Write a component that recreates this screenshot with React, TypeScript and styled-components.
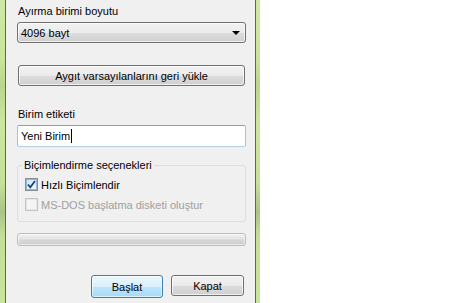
import React from 'react';
import styled, { createGlobalStyle } from 'styled-components';

const GlobalStyle = createGlobalStyle`
  html, body {
    margin: 0;
    padding: 0;
    background: #ffffff;
  }
  body {
    font-family: 'Liberation Sans', Arial, sans-serif;
    font-size: 11px;
    color: #000000;
  }
`;

const Screen = styled.div`
  display: flex;
  width: 450px;
  height: 303px;
  overflow: hidden;
  background: #ffffff;
`;

const FrameEdge = styled.div<{ $width: number }>`
  flex: 0 0 ${(props) => props.$width}px;
  background: linear-gradient(
    180deg,
    #cfe8a4 0%,
    #c9e59a 20%,
    #b9d68c 28%,
    #cbe69e 40%,
    #c6e299 60%,
    #a9c485 70%,
    #c4e097 78%,
    #c8e59c 100%
  );
`;

const Panel = styled.div`
  flex: 0 0 251px;
  background: #f0f0f0;
  border-left: 1px solid #5c6b50;
  border-right: 1px solid #5c6b50;
  padding: 0 9px 0 11px;
  box-sizing: border-box;
  display: flex;
  flex-direction: column;
`;

const Desktop = styled.div`
  flex: 1;
  background: #ffffff;
`;

const Label = styled.div<{ $top: number }>`
  margin-top: ${(props) => props.$top}px;
  line-height: 15px;
  height: 15px;
  padding-left: 1px;
`;

const Select = styled.div`
  margin-top: 3px;
  height: 21px;
  border: 1px solid #707070;
  border-radius: 3px;
  box-sizing: border-box;
  background: linear-gradient(180deg, #f2f2f2 0%, #ebebeb 50%, #dddddd 51%, #cfcfcf 100%);
  box-shadow: inset 0 0 0 1px rgba(255, 255, 255, 0.7);
  display: flex;
  align-items: center;
  justify-content: space-between;
  padding: 0 5px 0 3px;
`;

const Arrow = styled.span`
  width: 0;
  height: 0;
  border-left: 4px solid transparent;
  border-right: 4px solid transparent;
  border-top: 4px solid #000000;
`;

const PushButton = styled.button<{ $focused?: boolean; $width?: number }>`
  font: inherit;
  color: #000000;
  height: ${(props) => (props.$focused ? 23 : 21)}px;
  width: ${(props) => (props.$width ? `${props.$width}px` : 'auto')};
  border: 1px solid ${(props) => (props.$focused ? '#3c7fb1' : '#707070')};
  border-radius: 3px;
  box-sizing: border-box;
  padding: 0;
  background: ${(props) =>
    props.$focused
      ? 'linear-gradient(180deg, #eaf6fd 0%, #d9f0fc 50%, #bee6fd 51%, #a7d9f5 100%)'
      : 'linear-gradient(180deg, #f2f2f2 0%, #ebebeb 50%, #dddddd 51%, #cfcfcf 100%)'};
  box-shadow: inset 0 0 0 1px
    ${(props) => (props.$focused ? 'rgba(255, 255, 255, 0.6)' : 'rgba(255, 255, 255, 0.7)')};
  display: flex;
  align-items: center;
  justify-content: center;
`;

const WideButton = styled(PushButton)`
  margin-top: 22px;
  margin-left: 1px;
  margin-right: 1px;
`;

const TextInput = styled.div`
  margin-top: 3px;
  height: 22px;
  box-sizing: border-box;
  background: #ffffff;
  border: 1px solid #abadb3;
  border-top-color: #7da2ce;
  border-left-color: #a4c0e2;
  border-right-color: #a4c0e2;
  border-bottom-color: #b5cfe7;
  border-radius: 2px;
  display: flex;
  align-items: center;
  padding-left: 3px;
`;

const Caret = styled.span`
  display: inline-block;
  width: 1px;
  height: 14px;
  background: #000000;
  margin-left: 1px;
`;

const GroupBox = styled.fieldset`
  margin: 11px 0 0 0;
  height: 64px;
  box-sizing: border-box;
  border: 1px solid #d5dfe5;
  border-radius: 3px;
  padding: 4px 0 0 7px;
  display: flex;
  flex-direction: column;
  gap: 5px;
`;

const Legend = styled.legend`
  padding: 0 2px;
  margin-left: -3px;
  line-height: 15px;
`;

const CheckRow = styled.label<{ $disabled?: boolean }>`
  display: flex;
  align-items: center;
  gap: 3px;
  height: 15px;
  color: ${(props) => (props.$disabled ? '#a0a0a0' : '#000000')};
`;

const Box = styled.span<{ $disabled?: boolean }>`
  width: 13px;
  height: 13px;
  box-sizing: border-box;
  border: 1px solid ${(props) => (props.$disabled ? '#c4c4c4' : '#8e8f8f')};
  background: ${(props) =>
    props.$disabled
      ? '#f4f4f4'
      : 'linear-gradient(135deg, #c9e3f9 0%, #e6f2fc 60%, #f4f9fe 100%)'};
  box-shadow: inset 0 0 0 1px ${(props) => (props.$disabled ? '#e6e6e6' : '#8fb6d8')};
  display: flex;
  align-items: center;
  justify-content: center;
`;

const Progress = styled.div`
  margin-top: 11px;
  height: 13px;
  box-sizing: border-box;
  border: 1px solid #bcbcbc;
  border-radius: 3px;
  background: linear-gradient(180deg, #f3f3f3 0%, #e4e4e4 40%, #d6d6d6 60%, #cdcdcd 100%);
  box-shadow: inset 0 0 0 1px rgba(255, 255, 255, 0.6);
`;

const Actions = styled.div`
  margin-top: 29px;
  display: flex;
  gap: 8px;
  padding-left: 74px;
`;

const Check = () => (
  <svg width="9" height="9" viewBox="0 0 9 9">
    <path d="M1 4.5 L3.3 7.3 L8 1" fill="none" stroke="#1c3f80" strokeWidth="1.8" />
  </svg>
);

const App: React.FC = () => {
  return (
    <>
      <GlobalStyle />
      <Screen>
        <FrameEdge $width={5} />
        <Panel>
          <Label $top={4}>Ayırma birimi boyutu</Label>
          <Select>
            <span>4096 bayt</span>
            <Arrow />
          </Select>
          <WideButton>Aygıt varsayılanlarını geri yükle</WideButton>
          <Label $top={21}>Birim etiketi</Label>
          <TextInput>
            Yeni Birim
            <Caret />
          </TextInput>
          <GroupBox>
            <Legend>Biçimlendirme seçenekleri</Legend>
            <CheckRow>
              <Box>
                <Check />
              </Box>
              Hızlı Biçimlendir
            </CheckRow>
            <CheckRow $disabled>
              <Box $disabled />
              MS-DOS başlatma disketi oluştur
            </CheckRow>
          </GroupBox>
          <Progress />
          <Actions>
            <PushButton $focused $width={72}>
              Başlat
            </PushButton>
            <PushButton $width={73}>Kapat</PushButton>
          </Actions>
        </Panel>
        <FrameEdge $width={4} />
        <Desktop />
      </Screen>
    </>
  );
};

export default App;
